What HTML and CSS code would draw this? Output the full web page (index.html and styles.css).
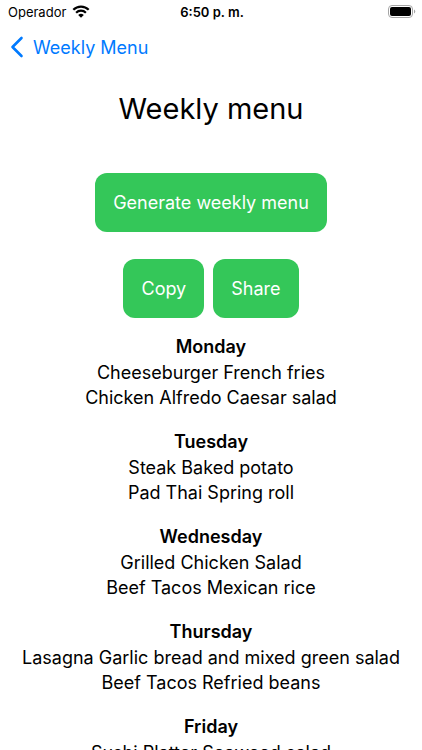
FILE: index.html
```html
<!DOCTYPE html>
<html lang="en">
	<head>
		<meta charset="utf-8">
		<meta name="viewport" content="width=device-width, initial-scale=1">
		<title>Weekly menu</title>
		<link rel="stylesheet" href="styles.css">
	</head>
	<body>
		<div class="status">
			<div class="carrier">
				<span>Operador</span>
				<svg class="wifi" width="18" height="13" viewBox="0 0 18 13">
					<path d="M1.3 4.8a10.9 10.9 0 0 1 15.4 0M4.1 7.7a7 7 0 0 1 9.8 0" fill="none" stroke="#000" stroke-width="2.2"/>
					<path d="M9 12.8L6.2 10a4 4 0 0 1 5.6 0z"/>
				</svg>
			</div>
			<div class="time">6:50 p. m.</div>
			<div class="power">
				<svg width="28" height="13" viewBox="0 0 28 13">
					<rect x=".5" y=".5" width="24" height="12" rx="3.5" fill="none" stroke="#a6a6a6"/>
					<rect x="2" y="2" width="21" height="9" rx="2"/>
					<path d="M26 4.5v4a2.2 2.2 0 0 0 0-4z" fill="#a6a6a6"/>
				</svg>
			</div>
		</div>

		<nav class="nav">
			<a href="#" class="back">
				<svg width="14" height="22" viewBox="0 0 14 22">
					<path d="M11.5 2L2.5 11l9 9" fill="none" stroke="#007aff" stroke-width="2.6" stroke-linecap="round" stroke-linejoin="round"/>
				</svg>
				<span>Weekly Menu</span>
			</a>
		</nav>

		<main class="content">
			<h1>Weekly menu</h1>

			<button type="button" class="btn">Generate weekly menu</button>

			<div class="actions">
				<button type="button" class="btn">Copy</button>
				<button type="button" class="btn">Share</button>
			</div>

			<div class="days">
				<section class="day">
					<h2>Monday</h2>
					<p>Cheeseburger French fries</p>
					<p>Chicken Alfredo Caesar salad</p>
				</section>
				<section class="day">
					<h2>Tuesday</h2>
					<p>Steak Baked potato</p>
					<p>Pad Thai Spring roll</p>
				</section>
				<section class="day">
					<h2>Wednesday</h2>
					<p>Grilled Chicken Salad</p>
					<p>Beef Tacos Mexican rice</p>
				</section>
				<section class="day">
					<h2>Thursday</h2>
					<p>Lasagna Garlic bread and mixed green salad</p>
					<p>Beef Tacos Refried beans</p>
				</section>
				<section class="day">
					<h2>Friday</h2>
					<p>Sushi Platter Seaweed salad</p>
				</section>
			</div>
		</main>
	</body>
</html>
```

FILE: styles.css
```css
* {
	box-sizing: border-box;
}

html, body {
	height: 100%;
}

body {
	display: flex;
	flex-direction: column;
	margin: 0;
	background: #fff;
	color: #000;
	font-family: Inter, "Liberation Sans", sans-serif;
	font-size: 18px;
}

h1, h2, p {
	margin: 0;
}

.status {
	display: grid;
	flex: none;
	grid-template-columns: 1fr auto 1fr;
	align-items: center;
	height: 23px;
	padding: 0 6px 0 8px;
	font-size: 13px;
}

.carrier {
	display: flex;
	align-items: center;
	gap: 6px;
}

.time {
	font-weight: 600;
}

.power {
	display: flex;
	justify-content: flex-end;
}

.nav {
	flex: none;
	padding: 12px 10px;
}

.back {
	display: inline-flex;
	align-items: center;
	gap: 9px;
	height: 24px;
	color: #007aff;
	font-size: 18px;
	text-decoration: none;
}

/* the menu scrolls under the nav bar */
.content {
	display: flex;
	flex: 1;
	flex-direction: column;
	align-items: center;
	min-height: 0;
	padding-top: 15px;
	overflow-y: auto;
	scrollbar-width: none;
	text-align: center;
}

h1 {
	flex: none;
	margin-bottom: 44px;
	font-size: 29px;
	font-weight: 400;
	line-height: 40px;
}

.btn {
	flex: none;
	height: 59px;
	padding: 0 18px;
	border: 0;
	border-radius: 12px;
	background: #34c759;
	color: #fff;
	font-family: inherit;
	font-size: 18px;
}

.actions {
	display: flex;
	flex: none;
	gap: 9px;
	margin: 27px 0 16px;
}

.day {
	margin-bottom: 19px;
	line-height: 25px;
}

.day h2 {
	font-size: 18px;
	font-weight: 600;
	line-height: 26px;
}
```
